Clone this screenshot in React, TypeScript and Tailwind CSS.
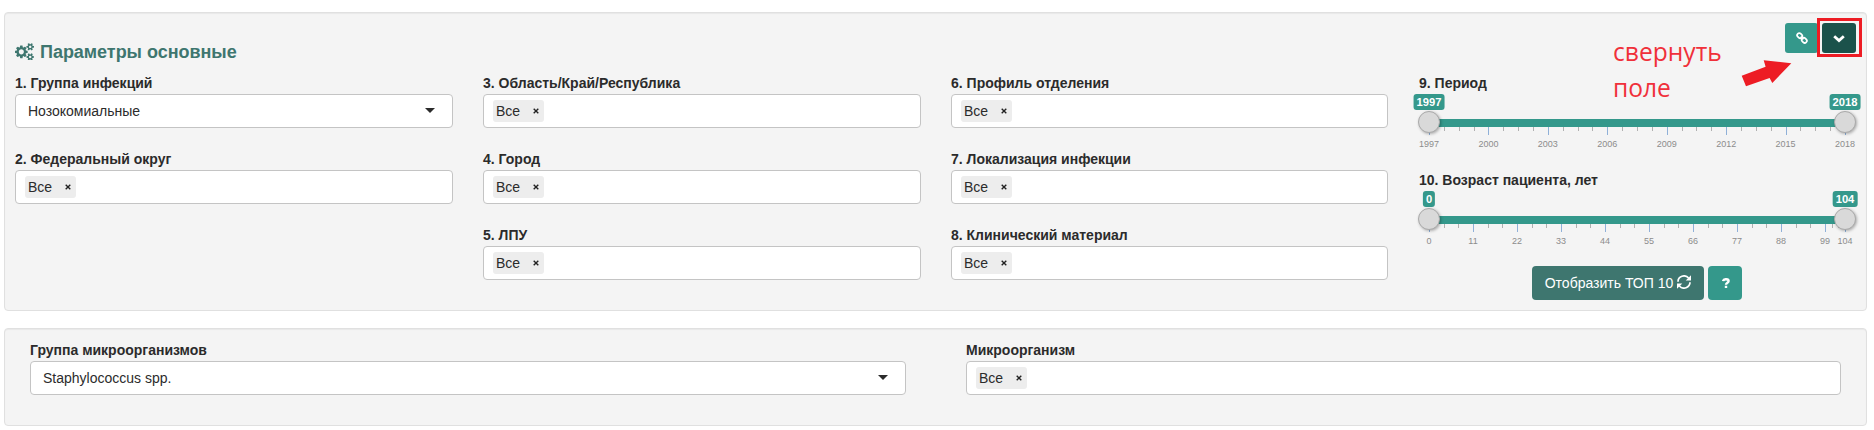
import React from "react";

const LABEL = "relative -top-px text-[14px] leading-5 font-bold text-[#2b2b2b]";

function Chip() {
  return (
    <span className="flex h-[22px] w-[51px] items-center justify-between rounded-[3px] bg-[#ededed] pr-[5px] pl-[3px] text-[14px]">
      Все
      <svg className="-mt-px h-[6px] w-[6px]" viewBox="0 0 6 6" stroke="#222" strokeWidth="1.4" fill="none">
        <path d="M.7.8l4.600 4.400M5.300.8L.7 5.200" />
      </svg>
    </span>
  );
}

function Field({ label, value }: { label: string; value?: string }) {
  return (
    <div className="h-[76px]">
      <div className={LABEL}>{label}</div>
      <div className={"flex h-[34px] items-center rounded border border-[#c4c4c4] bg-white " + (value ? "justify-between pr-[17px] pl-3" : "pl-[9px]")}>
        {value ? (
          <>
            <span className="text-[14px]">{value}</span>
            <svg className="-mt-px h-[5px] w-[10px]" viewBox="0 0 10 5" fill="#2b2b2b">
              <path d="M0 0h10L5 5z" />
            </svg>
          </>
        ) : (
          <Chip />
        )}
      </div>
    </div>
  );
}

type SliderProps = { label: string; min: number; max: number; step: number; parts: number };

function Slider({ label, min, max, step, parts }: SliderProps) {
  const pct = (v: number) => ((v - min) / (max - min)) * 100 + "%";
  const majors: number[] = [];
  for (let v = min; v < max; v += step) majors.push(v);
  majors.push(max);
  const minors: number[] = [];
  majors.slice(0, -1).forEach((v, i) => {
    for (let k = 1; k < parts; k++) minors.push(v + ((majors[i + 1] - v) * k) / parts);
  });
  return (
    <div className="h-[97px]">
      <div className={LABEL + " pl-px"}>{label}</div>
      <div className="relative mr-[11px] ml-[11px] h-[60px]">
        <div className="absolute top-[25px] right-0 left-0 h-2 bg-[#34988b]" />
        {minors.map((v) => (
          <i key={v} className="absolute top-[33px] h-1 w-px bg-[#b0b0b0]" style={{ left: pct(v) }} />
        ))}
        {majors.map((v) => (
          <React.Fragment key={v}>
            <i className="absolute top-[33px] h-2 w-px bg-[#8fb0d8]" style={{ left: pct(v) }} />
            <span
              className="absolute top-[45px] -translate-x-1/2 text-[9px] leading-[11px] text-[#8c8c8c]"
              style={{ left: pct(v) }}
            >
              {v}
            </span>
          </React.Fragment>
        ))}
        {[min, max].map((v) => (
          <React.Fragment key={v}>
            <span
              className="absolute top-0 h-4 -translate-x-1/2 rounded-[3px] bg-[#34988b] px-[3px] text-[11.2px] leading-4 font-bold text-white"
              style={{ left: pct(v) }}
            >
              {v}
            </span>
            <span
              className="absolute top-[17px] h-[22px] w-[22px] -translate-x-1/2 rounded-full border border-[#aaa] bg-[#d9d9d9] shadow-[1px_1px_3px_rgba(0,0,0,0.3)]"
              style={{ left: pct(v) }}
            />
          </React.Fragment>
        ))}
      </div>
    </div>
  );
}

const PANEL = "relative rounded border border-[#e0e0e0] bg-[#f4f4f4] shadow-[inset_0_1px_1px_rgba(0,0,0,0.05)]";

export default function App() {
  return (
    <div className="h-[430px] w-[1874px] overflow-hidden bg-white pt-3 pl-1 font-['Liberation_Sans',Arial,sans-serif] text-[#2b2b2b]">
      <section className={PANEL + " h-[299px] w-[1863px] px-[10px] pt-[61px]"}>
        <h1 className="absolute top-[29px] left-[10px] flex h-5 items-center gap-[6px] text-[18px] font-bold tracking-[-0.03px] text-[#3e766f]">
          <svg className="-mt-px w-[19px]" viewBox="0 0 1920 1792" fill="currentColor">
            <path d="M896 896q0-106-75-181t-181-75-181 75-75 181 75 181 181 75 181-75 75-181zm768 512q0-52-38-90t-90-38-90 38-38 90q0 53 37.500 90.500t90.500 37.500 90.500-37.500 37.500-90.500zm0-1024q0-52-38-90t-90-38-90 38-38 90q0 53 37.500 90.500t90.500 37.500 90.500-37.500 37.500-90.500zm-384 421v185q0 10-7 19.500t-16 10.500l-155 24q-11 35-32 76 34 48 90 115 7 11 7 20 0 12-7 19-23 30-82.500 89.500t-78.500 59.500q-11 0-21-7l-115-90q-37 19-77 31-11 108-23 155-7 24-30 24h-186q-11 0-20-7.500t-10-17.500l-23-153q-34-10-75-31l-118 89q-7 7-20 7-11 0-21-8-144-133-144-160 0-9 7-19 10-14 41-53t47-61q-23-44-35-82l-152-24q-10-1-17-9.500t-7-19.500v-185q0-10 7-19.500t16-10.500l155-24q11-35 32-76-34-48-90-115-7-11-7-20 0-12 7-20 22-30 82-89t79-59q11 0 21 7l115 90q34-18 77-32 11-108 23-154 7-24 30-24h186q11 0 20 7.500t10 17.500l23 153q34 10 75 31l118-89q8-7 20-7 11 0 21 8 144 133 144 160 0 8-7 19-12 16-42 54t-45 60q23 48 34 82l152 23q10 2 17 10.500t7 19.500zm640 533v140q0 16-149 31-12 27-30 52 51 113 51 138 0 4-4 7-122 71-124 71-8 0-46-47t-52-68q-20 2-30 2t-30-2q-14 21-52 68t-46 47q-2 0-124-71-4-3-4-7 0-25 51-138-18-25-30-52-149-15-149-31v-140q0-16 149-31 13-29 30-52-51-113-51-138 0-4 4-7 4-2 35-20t59-34 30-16q8 0 46 46.500t52 67.500q20-2 30-2t30 2q51-71 92-112l6-2q4 0 124 70 4 3 4 7 0 25-51 138 17 23 30 52 149 15 149 31zm0-1024v140q0 16-149 31-12 27-30 52 51 113 51 138 0 4-4 7-122 71-124 71-8 0-46-47t-52-68q-20 2-30 2t-30-2q-14 21-52 68t-46 47q-2 0-124-71-4-3-4-7 0-25 51-138-18-25-30-52-149-15-149-31v-140q0-16 149-31 13-29 30-52-51-113-51-138 0-4 4-7 4-2 35-20t59-34 30-16q8 0 46 46.500t52 67.500q20-2 30-2t30 2q51-71 92-112l6-2q4 0 124 70 4 3 4 7 0 25-51 138 17 23 30 52 149 15 149 31z" />
          </svg>
          Параметры основные
        </h1>
        <div className="grid grid-cols-[438px_438px_437px_438px] gap-x-[30px]">
          <div>
            <Field label="1. Группа инфекций" value="Нозокомиальные" />
            <Field label="2. Федеральный округ" />
          </div>
          <div>
            <Field label="3. Область/Край/Республика" />
            <Field label="4. Город" />
            <Field label="5. ЛПУ" />
          </div>
          <div>
            <Field label="6. Профиль отделения" />
            <Field label="7. Локализация инфекции" />
            <Field label="8. Клинический материал" />
          </div>
          <div>
            <Slider label="9. Период" min={1997} max={2018} step={3} parts={4} />
            <Slider label="10. Возраст пациента, лет" min={0} max={104} step={11} parts={3} />
            <div className="-mt-[2px] flex justify-center gap-1 text-white">
              <button className="flex h-[34px] w-[172px] items-center justify-center gap-1 rounded bg-[#3e766f] text-[14px]">
                Отобразить ТОП 10
                <svg className="-mt-[3px] h-[14px] w-[14px]" viewBox="0 0 14 14" fill="none" stroke="white" strokeWidth="1.7">
                  <path d="M1 6.800A6 5.800 0 0 1 11.600 3M13 7.200A6 5.800 0 0 1 2.400 11" />
                  <path d="M14 .2v5.300H8.700zM0 13.800V8.500h5.300z" fill="white" stroke="none" />
                </svg>
              </button>
              <button className="flex h-[34px] w-[34px] items-center justify-center rounded bg-[#34988b]">
                <svg className="ml-[2px] h-[10px] w-2" viewBox="0 0 8 10" fill="none" stroke="white" strokeWidth="2.400">
                  <path d="M1.100 3.100C1.500.5 6.600.6 6.600 3.100 6.600 4.800 4 4.600 4 6.700M4 7.800V10" />
                </svg>
              </button>
            </div>
          </div>
        </div>
        <div className="absolute top-[10px] right-[10px] flex gap-1">
          <button className="flex h-[30px] w-[33px] items-center justify-center rounded-[3px] bg-[#34988b]">
            <svg className="-mt-px h-3 w-3" viewBox="0 0 12 12" fill="none" stroke="white" strokeWidth="1.700">
              <rect x="1" y="1.600" width="5.400" height="4.200" rx="2" transform="rotate(45 3.700 3.700)" />
              <rect x="5.600" y="6.200" width="5.400" height="4.200" rx="2" transform="rotate(45 8.300 8.300)" />
              <path d="M4.600 4.600l2.800 2.800" />
            </svg>
          </button>
          <button className="flex h-[30px] w-[34px] items-center justify-center rounded-[3px] bg-[#1b524b]">
            <svg className="h-3 w-3" viewBox="0 0 12 12" fill="none" stroke="white" strokeWidth="2.800">
              <path d="M1.200 4.200L6 8.600l4.800-4.400" />
            </svg>
          </button>
        </div>
        <div className="absolute top-[5px] left-[1812px] h-[39px] w-[45px] border-[3px] border-[#ed1c24]" />
        <p className="absolute top-[21px] left-[1608px] font-['Open_Sans',sans-serif] text-[24.6px] leading-9 text-[#f0303a]">
          свернуть
          <br />
          поле
        </p>
        <svg className="absolute top-[47px] left-[1736px] h-[27px] w-[51px]" viewBox="0 0 51 27" fill="#ed1c24">
          <path d="M.700 15.700L24.600 6.700 22.700.3 50.300 3.300 31.300 23 28.600 18 5 26.300z" />
        </svg>
      </section>
      <section className={PANEL + " mt-[17px] grid h-[98px] w-[1863px] grid-cols-[876px_875px] gap-x-[60px] pt-[12px] pl-[25px]"}>
        <Field label="Группа микроорганизмов" value="Staphylococcus spp." />
        <Field label="Микроорганизм" />
      </section>
    </div>
  );
}
